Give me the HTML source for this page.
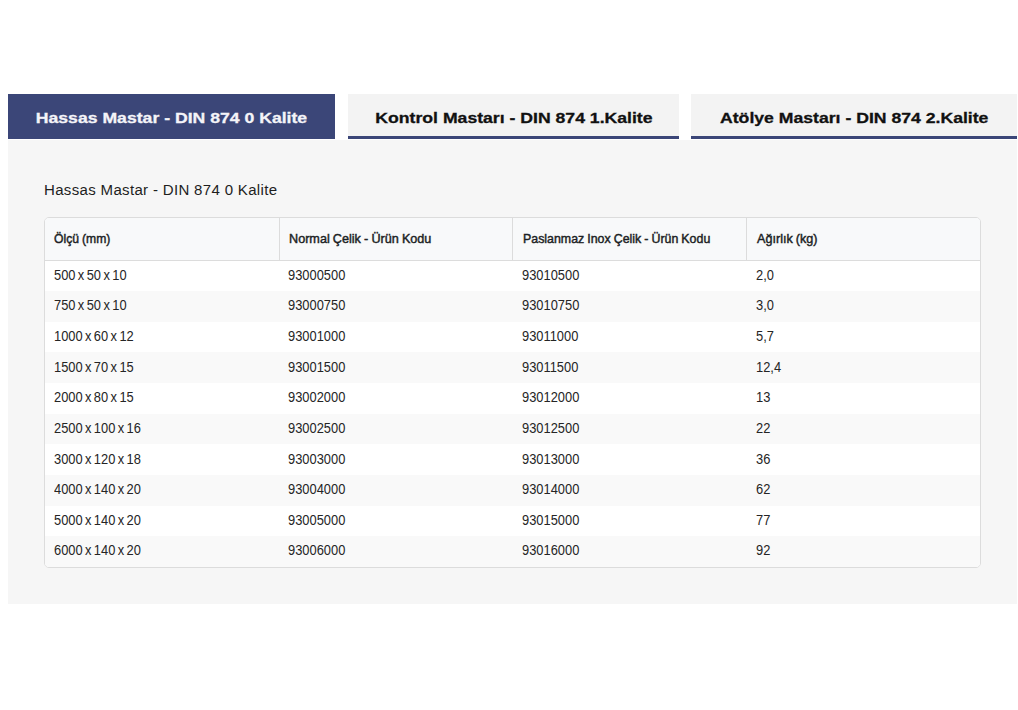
<!DOCTYPE html>
<html><head><meta charset="utf-8">
<style>
html,body{margin:0;padding:0;background:#fff;width:1018px;height:710px;overflow:hidden;position:relative;font-family:"Liberation Sans",sans-serif;}
.tab{position:absolute;top:94px;height:45px;box-sizing:border-box;background:#f3f3f3;border-bottom:3px solid #3b4678;color:#111;font-weight:bold;font-size:15px;line-height:45px;text-align:center;white-space:nowrap;}
.tab.active{background:#3b4678;color:#f4f4f8;border-bottom:none;}
.tab span{display:inline-block;transform:scaleX(1.175);position:relative;top:1px;-webkit-text-stroke:0.3px currentColor;}
#t1{left:8px;width:327px;}
#t2{left:348px;width:331px;}
#t3{left:691px;width:326px;}
.panel{position:absolute;left:8px;top:140px;width:1009px;height:464px;background:#f6f6f6;}
.h{position:absolute;left:44px;top:180px;font-size:15.5px;letter-spacing:0.33px;word-spacing:0px;transform:scaleX(0.97);transform-origin:0 50%;color:#1e1e1e;white-space:nowrap;line-height:20px;}
.tbl{position:absolute;left:44px;top:217px;width:937px;height:351px;box-sizing:border-box;border:1px solid #dcdcdc;border-radius:5px;overflow:hidden;background:#fff;}
.hdr{position:absolute;left:0;top:0;width:935px;height:42.5px;box-sizing:border-box;background:#f8f9fa;border-bottom:1px solid #dcdcdc;}
.hdr div{position:absolute;top:0;height:42px;line-height:42px;font-size:13px;font-weight:normal;-webkit-text-stroke:0.45px #1c1f24;color:#1c1f24;letter-spacing:0px;word-spacing:-0.4px;transform:scaleX(0.94);transform-origin:0 50%;white-space:nowrap;box-sizing:border-box;}
.vl{position:absolute;top:0;width:1px;height:42px;background:#dcdcdc;}
.row{position:absolute;left:0;width:935px;height:30.625px;}
.row.s{background:#f9f9f9;}
.row div{position:absolute;top:-0.65px;height:30.625px;line-height:30.625px;font-size:14px;letter-spacing:0px;transform:scaleX(0.92);transform-origin:0 50%;color:#252525;white-space:nowrap;}
.row .c1{word-spacing:-1.3px;}
.c1{left:9px;}.c2{left:243px;}.c3{left:477px;}.c4{left:711px;}
.hdr .c2{left:244px;transform:scaleX(0.972);}.hdr .c3{left:478px;transform:scaleX(0.952);}.hdr .c4{left:712px;transform:scaleX(0.97);}.hdr .c1{transform:scaleX(0.936);}
</style></head>
<body>
<div class="tab active" id="t1"><span>Hassas Mastar - DIN 874 0 Kalite</span></div>
<div class="tab" id="t2"><span>Kontrol Mastarı - DIN 874 1.Kalite</span></div>
<div class="tab" id="t3"><span>Atölye Mastarı - DIN 874 2.Kalite</span></div>
<div class="panel"></div>
<div class="h">Hassas Mastar - DIN 874 0 Kalite</div>
<div class="tbl">
 <div class="hdr">
  <div class="c1">Ölçü (mm)</div>
  <div class="c2">Normal Çelik - Ürün Kodu</div>
  <div class="c3">Paslanmaz Inox Çelik - Ürün Kodu</div>
  <div class="c4">Ağırlık (kg)</div>
  <span class="vl" style="left:234px"></span>
  <span class="vl" style="left:467px"></span>
  <span class="vl" style="left:701px"></span>
 </div>
 <div class="row" style="top:42.5px"><div class="c1">500 x 50 x 10</div><div class="c2">93000500</div><div class="c3">93010500</div><div class="c4">2,0</div></div>
 <div class="row s" style="top:73.125px"><div class="c1">750 x 50 x 10</div><div class="c2">93000750</div><div class="c3">93010750</div><div class="c4">3,0</div></div>
 <div class="row" style="top:103.75px"><div class="c1">1000 x 60 x 12</div><div class="c2">93001000</div><div class="c3">93011000</div><div class="c4">5,7</div></div>
 <div class="row s" style="top:134.375px"><div class="c1">1500 x 70 x 15</div><div class="c2">93001500</div><div class="c3">93011500</div><div class="c4">12,4</div></div>
 <div class="row" style="top:165px"><div class="c1">2000 x 80 x 15</div><div class="c2">93002000</div><div class="c3">93012000</div><div class="c4">13</div></div>
 <div class="row s" style="top:195.625px"><div class="c1">2500 x 100 x 16</div><div class="c2">93002500</div><div class="c3">93012500</div><div class="c4">22</div></div>
 <div class="row" style="top:226.25px"><div class="c1">3000 x 120 x 18</div><div class="c2">93003000</div><div class="c3">93013000</div><div class="c4">36</div></div>
 <div class="row s" style="top:256.875px"><div class="c1">4000 x 140 x 20</div><div class="c2">93004000</div><div class="c3">93014000</div><div class="c4">62</div></div>
 <div class="row" style="top:287.5px"><div class="c1">5000 x 140 x 20</div><div class="c2">93005000</div><div class="c3">93015000</div><div class="c4">77</div></div>
 <div class="row s" style="top:318.125px"><div class="c1">6000 x 140 x 20</div><div class="c2">93006000</div><div class="c3">93016000</div><div class="c4">92</div></div>
</div>
</body></html>
